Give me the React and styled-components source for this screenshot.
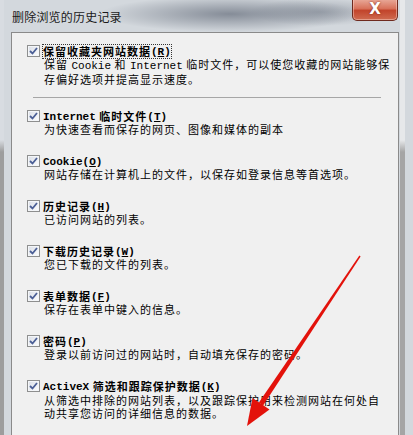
import React from "react";
import styled, { createGlobalStyle } from "styled-components";

const GlobalStyle = createGlobalStyle`
  html, body {
    margin: 0;
    padding: 0;
    background: #d3d8dd;
  }
  #root {
    width: 413px;
    height: 435px;
  }
`;

const Window = styled.div`
  position: relative;
  width: 413px;
  height: 435px;
  overflow: hidden;
  display: flex;
  flex-direction: column;
  font-family: "Noto Sans CJK SC", "Noto Sans", sans-serif;
  background:
    radial-gradient(ellipse 130px 18px at 230px 14px, rgba(100, 108, 122, 0.7), rgba(100, 108, 122, 0)),
    radial-gradient(ellipse 70px 14px at 320px 12px, rgba(100, 108, 122, 0.45), rgba(100, 108, 122, 0)),
    linear-gradient(#d8dce1 0, #d8dce1 140px, #9d9d9d 152px) no-repeat 0 0 / 4px 100%,
    linear-gradient(#e6e8ea 0, #e6e8ea 140px, #a5a5a5 152px) no-repeat 400px 0 / 5px 100%,
    #d3d8dd;
`;

const TitleBar = styled.div`
  height: 32px;
  flex: none;
  display: flex;
  justify-content: space-between;
  align-items: flex-start;
  padding: 0 15px 0 12px;
`;

const Title = styled.div`
  margin-top: 10px;
  font-size: 12px;
  line-height: 14px;
  letter-spacing: 0.2px;
  color: #1a1a1a;
`;

const CloseButton = styled.div`
  width: 44px;
  height: 21px;
  margin-top: -1px;
  border: 1px solid #6e2a1e;
  border-top: none;
  border-radius: 0 0 5px 5px;
  background: linear-gradient(#e9ab9b 0%, #d8735c 45%, #c2442b 55%, #cf6b50 100%);
  box-shadow: inset 0 0 0 1px rgba(255, 220, 210, 0.45);
  display: flex;
  align-items: center;
  justify-content: center;
  color: #fff;
  font-family: "DejaVu Sans", sans-serif;
  font-weight: bold;
  font-size: 15px;
  line-height: 1;
  text-shadow: 0 0 2px #7a2010;
`;

const Body = styled.div`
  flex: 1;
  display: flex;
  padding: 0 14px 0 11px;
`;

const Panel = styled.div`
  flex: 1;
  border: 1px solid #8a8a8a;
  border-bottom: none;
  background: #f0f0f0;
  padding: 12px 0 0 15px;
`;

const Item = styled.div`
  margin-bottom: ${(p) => p.$gap}px;
`;

const Row = styled.div`
  display: flex;
  align-items: center;
  height: 12px;
`;

const Box = styled.span`
  box-sizing: border-box;
  width: 13px;
  height: 12px;
  margin-right: 3px;
  border: 1px solid #8e8f8f;
  background: linear-gradient(135deg, #d8dde6, #ffffff);
  box-shadow: inset 0 0 0 1px #f4f6f9;
  display: flex;
  align-items: center;
  justify-content: center;
`;

const Label = styled.span`
  font-size: 11px;
  font-weight: bold;
  line-height: 12px;
  letter-spacing: 1px;
  color: #000;
  white-space: nowrap;
  outline: ${(p) => (p.$focus ? "1px dotted #333" : "none")};
  outline-offset: 0;
`;

const Latin = styled.span`
  font-family: "Liberation Mono", monospace;
  font-size: 11px;
  letter-spacing: 0;
  vertical-align: 1px;
`;

const Desc = styled.div`
  padding-left: 17px;
  margin-top: ${(p) => p.$top}px;
  font-size: 11px;
  line-height: ${(p) => p.$lh || 11}px;
  letter-spacing: 1px;
  color: #000;
  white-space: nowrap;

  ${Latin} {
    vertical-align: 0;
  }
`;

const Separator = styled.div`
  width: 348px;
  height: 1px;
  margin: 11px 0 12px 6px;
  background: #a6a6a6;
`;

const Overlay = styled.svg`
  position: absolute;
  left: 0;
  top: 0;
  pointer-events: none;
`;

const Check = () => (
  <Box>
    <svg width="9" height="8" viewBox="0 0 9 8">
      <path d="M1 4 L3.5 6.5 L8 1" fill="none" stroke="#4b5f96" strokeWidth="1.8" />
    </svg>
  </Box>
);

const Key = ({ k }) => (
  <Latin>
    (<u>{k}</u>)
  </Latin>
);

const items = [
  { label: <><Latin>Internet</Latin> 临时文件<Key k="T" /></>, desc: "为快速查看而保存的网页、图像和媒体的副本" },
  { label: <><Latin>Cookie</Latin><Key k="O" /></>, desc: "网站存储在计算机上的文件，以保存如登录信息等首选项。" },
  { label: <>历史记录<Key k="H" /></>, desc: "已访问网站的列表。" },
  { label: <>下载历史记录<Key k="W" /></>, desc: "您已下载的文件的列表。" },
  { label: <>表单数据<Key k="F" /></>, desc: "保存在表单中键入的信息。" },
  { label: <>密码<Key k="P" /></>, desc: "登录以前访问过的网站时，自动填充保存的密码。" },
];

export default function App() {
  return (
    <>
      <GlobalStyle />
      <Window>
        <TitleBar>
          <Title>删除浏览的历史记录</Title>
          <CloseButton>X</CloseButton>
        </TitleBar>
        <Body>
          <Panel>
            <Item $gap={0}>
              <Row>
                <Check />
                <Label $focus>
                  保留收藏夹网站数据<Key k="R" />
                </Label>
              </Row>
              <Desc $top={1} $lh={13}>
                保留 <Latin>Cookie</Latin> 和 <Latin>Internet</Latin> 临时文件，可以使您收藏的网站能够保
                <br />
                存偏好选项并提高显示速度。
              </Desc>
            </Item>
            <Separator />
            {items.map((it, i) => (
              <Item key={i} $gap={20}>
                <Row>
                  <Check />
                  <Label>{it.label}</Label>
                </Row>
                <Desc $top={2}>{it.desc}</Desc>
              </Item>
            ))}
            <Item $gap={0}>
              <Row>
                <Check />
                <Label>
                  <Latin>ActiveX</Latin> 筛选和跟踪保护数据<Key k="K" />
                </Label>
              </Row>
              <Desc $top={2} $lh={13}>
                从筛选中排除的网站列表，以及跟踪保护用来检测网站在何处自
                <br />
                动共享您访问的详细信息的数据。
              </Desc>
            </Item>
          </Panel>
        </Body>
        <Overlay width="413" height="435" viewBox="0 0 413 435">
          <polygon
            points="360.6,256.4 359.4,255.6 258.9,402.6 263.1,405.4"
            fill="#e3120b"
          />
          <polygon points="247,426 252.5,398 269.5,409.5" fill="#e3120b" />
        </Overlay>
      </Window>
    </>
  );
}
